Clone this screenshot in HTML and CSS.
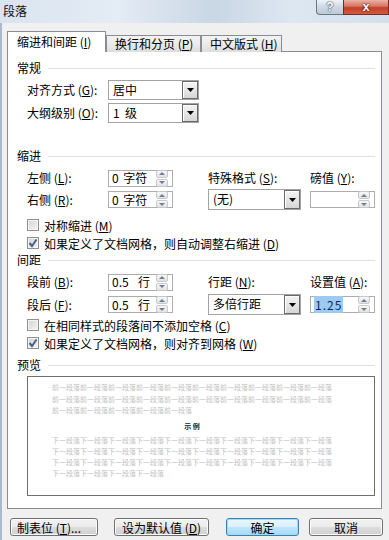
FILE: index.html
```html
<!DOCTYPE html>
<html lang="zh-CN">
<head>
<meta charset="UTF-8" />
<title>段落</title>
<link rel="stylesheet" href="styles.css">
</head>
<body>

<div class="window">
    <div class="titlebar">
        <div class="caption">段落</div>
        <div class="caption-btns">
            <div class="cap-help">?</div>
            <div class="cap-close">x</div>
        </div>
    </div>

    <div class="client">
        <div class="tabs">
            <div class="tab tab-1 active">缩进和间距 (<u>I</u>)</div>
            <div class="tab tab-2">换行和分页 (<u>P</u>)</div>
            <div class="tab tab-3">中文版式 (<u>H</u>)</div>
        </div>

        <div class="panel">
            <!-- 常规 -->
            <div class="group-title first"><span>常规</span><i></i></div>
            <div class="row row-top">
                <label>对齐方式 (<u>G</u>):</label>
                <div class="select sel-short"><span>居中</span><b class="drop"><svg width="7" height="4"><polygon points="0,0 7,0 3.5,4" /></svg></b></div>
            </div>
            <div class="row row-second">
                <label>大纲级别 (<u>O</u>):</label>
                <div class="select sel-short"><span>1&nbsp; 级</span><b class="drop"><svg width="7" height="4"><polygon points="0,0 7,0 3.5,4" /></svg></b></div>
            </div>

            <!-- 缩进 -->
            <div class="group-title indent-title"><span>缩进</span><i></i></div>
            <div class="row row-a indent-a">
                <label>左侧 (<u>L</u>):</label>
                <div class="spin"><span>0 字符</span><b class="spin-btns"><em class="up"></em><em class="down"></em></b></div>
                <label>特殊格式 (<u>S</u>):</label>
                <label>磅值 (<u>Y</u>):</label>
            </div>
            <div class="row row-b">
                <label>右侧 (<u>R</u>):</label>
                <div class="spin"><span>0 字符</span><b class="spin-btns"><em class="up"></em><em class="down"></em></b></div>
                <div class="select sel-wide"><span>(无)</span><b class="drop"><svg width="7" height="4"><polygon points="0,0 7,0 3.5,4" /></svg></b></div>
                <div class="spin"><span></span><b class="spin-btns"><em class="up"></em><em class="down"></em></b></div>
            </div>
            <div class="check first-check"><b class="box"></b>对称缩进 (<u>M</u>)</div>
            <div class="check"><b class="box checked"><svg width="10" height="10"><path d="M1.5 5 L4 8 L8.5 1.5" /></svg></b>如果定义了文档网格，则自动调整右缩进 (<u>D</u>)</div>

            <!-- 间距 -->
            <div class="group-title spacing-title"><span>间距</span><i></i></div>
            <div class="row row-a spacing-a">
                <label>段前 (<u>B</u>):</label>
                <div class="spin"><span>0.5&nbsp; 行</span><b class="spin-btns"><em class="up"></em><em class="down"></em></b></div>
                <label>行距 (<u>N</u>):</label>
                <label>设置值 (<u>A</u>):</label>
            </div>
            <div class="row row-b">
                <label>段后 (<u>F</u>):</label>
                <div class="spin"><span>0.5&nbsp; 行</span><b class="spin-btns"><em class="up"></em><em class="down"></em></b></div>
                <div class="select sel-wide"><span>多倍行距</span><b class="drop"><svg width="7" height="4"><polygon points="0,0 7,0 3.5,4" /></svg></b></div>
                <div class="spin"><span><mark>1.25</mark></span><b class="spin-btns"><em class="up"></em><em class="down"></em></b></div>
            </div>
            <div class="check first-check-2"><b class="box"></b>在相同样式的段落间不添加空格 (<u>C</u>)</div>
            <div class="check"><b class="box checked"><svg width="10" height="10"><path d="M1.5 5 L4 8 L8.5 1.5" /></svg></b>如果定义了文档网格，则对齐到网格 (<u>W</u>)</div>

            <!-- 预览 -->
            <div class="group-title preview-title"><span>预览</span><i></i></div>
            <div class="preview">
                <div class="pv-prev">
                    <div>前一段落前一段落前一段落前一段落前一段落前一段落前一段落前一段落前一段落前一段落</div>
                    <div>前一段落前一段落前一段落前一段落前一段落前一段落前一段落前一段落前一段落前一段落</div>
                    <div>前一段落前一段落前一段落前一段落前一段落</div>
                </div>
                <div class="pv-sample">示 例</div>
                <div class="pv-next">
                    <div>下一段落下一段落下一段落下一段落下一段落下一段落下一段落下一段落下一段落下一段落</div>
                    <div>下一段落下一段落下一段落下一段落下一段落下一段落下一段落下一段落下一段落下一段落</div>
                    <div>下一段落下一段落下一段落下一段落下一段落下一段落下一段落下一段落下一段落下一段落</div>
                    <div>下一段落下一段落下一段落下一段落</div>
                </div>
            </div>
        </div>

        <div class="buttons">
            <button class="btn btn-tabs">制表位 (<u>T</u>)...</button>
            <button class="btn btn-default">设为默认值 (<u>D</u>)</button>
            <button class="btn btn-ok">确定</button>
            <button class="btn btn-cancel">取消</button>
        </div>
    </div>
</div>

</body>
</html>
```

FILE: styles.css
```css
body {
    margin: 0;
    padding: 0;
    font-family: "Noto Sans CJK SC", "Liberation Sans", sans-serif;
    font-size: 12px;
    color: #000;
    background-color: #f0f0f0;
}

.window {
    width: 389px;
    height: 540px;
    overflow: hidden;
    background-color: #f0f0f0;
}

u {
    text-decoration: underline;
    text-underline-offset: 1px;
}

/* Barra de titulo */
.titlebar {
    height: 23px;
    display: flex;
    justify-content: space-between;
    align-items: flex-start;
    background: linear-gradient(90deg, #d9e4ef 0%, #e4ecf5 30%, #c9d6e4 55%, #dde7f2 75%, #d3dfec 100%);
}

.caption {
    padding-left: 3px;
    line-height: 22px;
    font-size: 12px;
    color: #111;
}

.caption-btns {
    display: flex;
}

.cap-help,
.cap-close {
    height: 15px;
    box-sizing: border-box;
    border: 1px solid #6b7787;
    border-top: none;
    text-align: center;
    font-family: "Liberation Sans", sans-serif;
    font-weight: bold;
    line-height: 14px;
    color: #fff;
}

.cap-help {
    width: 27px;
    border-radius: 0 0 0 4px;
    border-right: none;
    font-size: 12px;
    background: linear-gradient(#eef3f8, #cdd8e5 50%, #bccad9);
    text-shadow: 0 0 2px #33404f, 0 0 1px #33404f;
}

.cap-close {
    width: 46px;
    border-color: #7a2a20;
    font-size: 13px;
    background: linear-gradient(#eab2a6, #d7735f 45%, #c1402a 55%, #d45a3e);
    text-shadow: 0 0 2px #3a0c05, 0 0 1px #3a0c05;
}

.client {
    padding: 9px 0 0 5px;
    border-left: 2px solid #a9bacd;
    height: 517px;
    box-sizing: border-box;
}

/* Abas */
.tabs {
    display: flex;
    align-items: flex-end;
    height: 20px;
    margin-bottom: -1px;
}

.tab {
    box-sizing: border-box;
    height: 17px;
    border: 1px solid #898c95;
    border-bottom: none;
    line-height: 16px;
    padding-left: 8px;
    white-space: nowrap;
    background: linear-gradient(#f3f3f3, #ebebeb 50%, #dddddd);
}

.tab.active {
    position: relative;
    z-index: 1;
    height: 21px;
    padding-left: 9px;
    line-height: 20px;
    background: #fff;
}

.tab-1 { width: 99px; }
.tab-2 { width: 95px; }
.tab-3 { width: 81px; margin-left: 0; }

.panel {
    box-sizing: border-box;
    width: 375px;
    height: 458px;
    border: 1px solid #898c95;
    background-color: #fff;
    padding: 0 6px 0 9px;
}

/* Titulos de grupo */
.group-title {
    display: flex;
    align-items: center;
    height: 14px;
    line-height: 14px;
}

.group-title span {
    margin-right: 7px;
}

.group-title i {
    flex: 1;
    height: 1px;
    background-color: #dce0e4;
}

.group-title.first { margin-top: 9px; }
.indent-title { margin-top: 26px; }
.spacing-title { margin-top: 1px; }
.preview-title { margin-top: 6px; }

/* Linhas */
.row {
    display: grid;
    grid-template-columns: 81px 100px 102px 65px;
    align-items: center;
    padding-left: 10px;
    white-space: nowrap;
}

.row-top { height: 20px; margin-top: 5px; }
.row-second { height: 20px; margin-top: 3px; }
.row-a { height: 18px; }
.row-b { height: 21px; margin-top: 2px; }
.indent-a { margin-top: 6px; }
.spacing-a { margin-top: 6px; }
.spacing-a + .row-b { margin-top: 3px; }

label {
    line-height: 14px;
}

/* Select */
.select {
    box-sizing: border-box;
    display: flex;
    align-items: stretch;
    border: 1px solid #a3a3a3;
    background-color: #fff;
}

.select span {
    flex: 1;
    padding-left: 4px;
    line-height: 17px;
}

.sel-short { width: 91px; height: 20px; }
.sel-wide { width: 93px; height: 21px; }

.select .drop {
    width: 16px;
    box-sizing: border-box;
    border: 1px solid #6a6a6a;
    box-shadow: inset 1px 1px 0 #fff;
    background: linear-gradient(#f4f4f4, #e6e6e6 50%, #d6d6d6);
    display: flex;
    align-items: center;
    justify-content: center;
}

.drop svg polygon {
    fill: #000;
}

/* Spinner */
.spin {
    box-sizing: border-box;
    display: flex;
    align-items: center;
    width: 65px;
    height: 17px;
    border: 1px solid #abadb3;
    background-color: #fff;
}

.spin span {
    flex: 1;
    padding-left: 3px;
    line-height: 14px;
    word-spacing: 2px;
}

.spin mark {
    background-color: #9ccaf0;
    color: #0c2c5c;
    padding: 0 1px;
    letter-spacing: 1px;
}

.spin-btns {
    display: flex;
    flex-direction: column;
    gap: 1px;
    width: 12px;
    margin-right: 4px;
}

.spin-btns em {
    display: flex;
    align-items: center;
    justify-content: center;
    height: 6px;
    border: 1px solid #c9c9c9;
    border-radius: 2px;
    background: linear-gradient(#f7f7f7, #e3e3e3);
}

.spin-btns em::after {
    content: "";
    border-left: 3px solid transparent;
    border-right: 3px solid transparent;
}

.spin-btns .up::after {
    border-bottom: 3px solid #6c7f95;
}

.spin-btns .down::after {
    border-top: 3px solid #6c7f95;
}

/* Checkbox */
.check {
    display: flex;
    align-items: center;
    height: 18px;
    padding-left: 10px;
    white-space: pre;
}

.first-check { margin-top: 6px; }
.first-check-2 { margin-top: 1px; }

.check .box {
    box-sizing: border-box;
    width: 12px;
    height: 12px;
    margin-right: 5px;
    border: 1px solid #8e8f8f;
    box-shadow: inset 0 0 0 1px #f4f4f4;
    background: linear-gradient(135deg, #d2d2d2, #f6f6f6);
    display: flex;
    align-items: center;
    justify-content: center;
}

.check .box svg path {
    fill: none;
    stroke: #4a5f90;
    stroke-width: 2;
}

/* Visualizacao */
.preview {
    box-sizing: border-box;
    height: 120px;
    margin: 4px 0 0 10px;
    border: 1px solid #6e6e6e;
    background-color: #fff;
    padding: 5px 0 0 24px;
    font-size: 7px;
    line-height: 11.5px;
    color: #c2c2c2;
    white-space: nowrap;
}

.pv-prev {
    margin-bottom: 3px;
}

.pv-sample {
    width: 280px;
    text-align: center;
    color: #222;
    font-weight: bold;
    height: 12px;
    line-height: 12px;
    margin-bottom: 3px;
    white-space: pre;
}

.pv-next {
    line-height: 11.2px;
}

/* Botoes */
.buttons {
    display: flex;
    margin-top: 9px;
    padding-left: 3px;
}

.btn {
    box-sizing: border-box;
    height: 18px;
    padding: 0;
    border: 1px solid #707070;
    border-radius: 3px;
    font-family: "Noto Sans CJK SC", "Liberation Sans", sans-serif;
    font-size: 12px;
    line-height: 15px;
    color: #000;
    box-shadow: inset 0 0 0 1px #fbfbfb;
    background: linear-gradient(#f2f2f2, #ebebeb 50%, #dddddd 51%, #cfcfcf);
    white-space: nowrap;
}

.btn-tabs { width: 88px; text-align: left; padding-left: 6px; }
.btn-default { width: 95px; margin-left: 16px; }
.btn-ok {
    width: 73px;
    margin-left: 17px;
    border-color: #3c7fb1;
    box-shadow: inset 0 0 0 1px #9ddcf7;
    background: linear-gradient(#eaf6fd, #d9f0fc 50%, #bee6fd 51%, #a7d9f5);
}
.btn-cancel { width: 74px; margin-left: 10px; }
```
